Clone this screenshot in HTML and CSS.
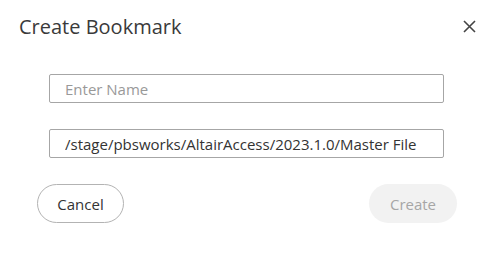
FILE: index.html
```html
<!DOCTYPE html>
<html lang="en">
<head>
    <meta charset="UTF-8">
    <title>Create Bookmark</title>
    <link rel="stylesheet" href="styles.css">
</head>
<body>
    <div class="dialog">
        <div class="dialog-header">
            <h1 class="dialog-title">Create Bookmark</h1>
            <button class="close-btn" aria-label="Close">
                <svg width="13" height="13" viewBox="0 0 13 13">
                    <path d="M1 1 L12 12 M12 1 L1 12" stroke="#444" stroke-width="1.6" fill="none"/>
                </svg>
            </button>
        </div>

        <div class="dialog-body">
            <input type="text" class="field" placeholder="Enter Name">
            <input type="text" class="field" value="/stage/pbsworks/AltairAccess/2023.1.0/Master File">
        </div>

        <div class="dialog-actions">
            <button class="btn btn-cancel">Cancel</button>
            <button class="btn btn-create" disabled>Create</button>
        </div>
    </div>
</body>
</html>
```

FILE: styles.css
```css
* {
    box-sizing: border-box;
}
body {
    margin: 0;
    background: #fff;
    font-family: "Open Sans", Arial, sans-serif;
    color: #333;
}
.dialog {
    width: 494px;
    height: 253px;
    background: #fff;
}
.dialog-header {
    display: flex;
    align-items: center;
    justify-content: space-between;
    padding: 13px 18px 0 19px;
    height: 40px;
}
.dialog-title {
    margin: 0;
    font-size: 20px;
    font-weight: 400;
    line-height: 28px;
    color: #3a3a3a;
}
.close-btn {
    border: none;
    background: none;
    padding: 0;
    width: 13px;
    height: 13px;
    cursor: pointer;
    display: flex;
}
.dialog-body {
    display: flex;
    flex-direction: column;
    gap: 26px;
    padding: 34px 50px 0 49px;
}
.field {
    width: 100%;
    height: 29px;
    border: 1px solid #a6a6a6;
    border-radius: 2px;
    padding: 0 15px;
    font-family: "Open Sans", Arial, sans-serif;
    font-size: 15px;
    color: #333;
    outline: none;
}
.field::placeholder {
    color: #999;
}
.dialog-actions {
    display: flex;
    justify-content: space-between;
    padding: 26px 37px 0 37px;
}
.btn {
    height: 39px;
    border-radius: 20px;
    font-family: "Open Sans", Arial, sans-serif;
    font-size: 15px;
    cursor: pointer;
}
.btn-cancel {
    width: 87px;
    border: 1px solid #b3b3b3;
    background: #fff;
    color: #333;
}
.btn-create {
    width: 88px;
    border: none;
    background: #f2f2f2;
    color: #a6a6a6;
    cursor: default;
}
```
